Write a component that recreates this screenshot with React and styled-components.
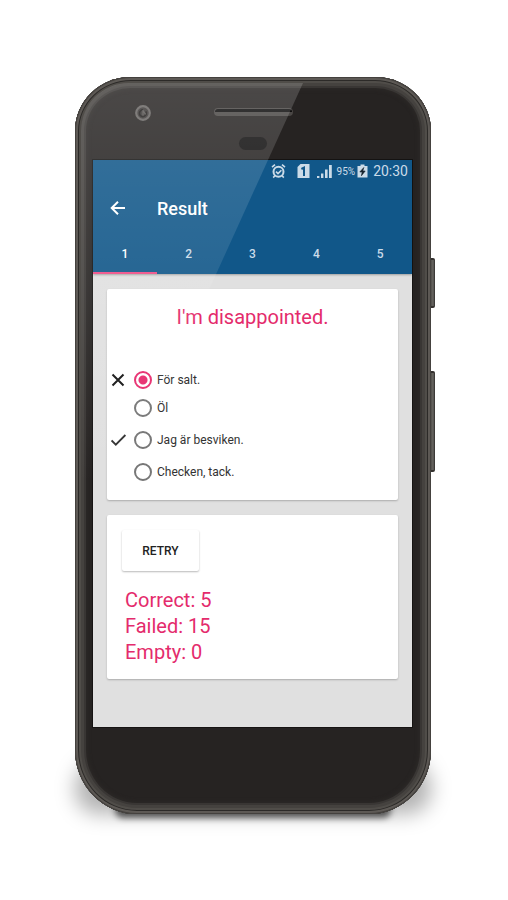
import React, { useState } from "react";
import styled, { createGlobalStyle } from "styled-components";

const GlobalStyle = createGlobalStyle`
  *, *::before, *::after { box-sizing: border-box; }
  body { margin: 0; background: #fff; font-family: Roboto, "Liberation Sans", sans-serif; }
  button { font-family: inherit; cursor: pointer; }
`;

const Page = styled.main`
  min-height: 100vh;
  padding: 77px 77px 86px 75px;
`;

const PhoneWrap = styled.div`
  position: relative;
  &::before {
    content: "";
    position: absolute;
    left: 0;
    right: 0;
    bottom: 0;
    height: 56px;
    border-radius: 30px 30px 24px 24px;
    background: rgba(0, 0, 0, 0.3);
    filter: blur(10px);
  }
  &::after {
    content: "";
    position: absolute;
    z-index: -1;
    left: 40px;
    right: 40px;
    bottom: -4px;
    height: 16px;
    border-radius: 8px;
    background: rgba(0, 0, 0, 0.6);
    filter: blur(3px);
  }
`;

const SideButton = styled.span`
  position: absolute;
  right: -4px;
  top: ${(p) => p.$top}px;
  width: 5px;
  height: ${(p) => p.$length}px;
  border-radius: 0 2px 2px 0;
  background: linear-gradient(90deg, #45433f, #696763 60%, #2e2c2a);
  border-block: 2px solid #34312f;
`;

const Phone = styled.div`
  position: relative;
  overflow: hidden;
  border-radius: 56px 56px 62px 62px / 54px 54px 64px 64px;
  background: #262322;
  box-shadow: inset 0 0 0 1px #44413e, inset 0 0 0 3px #5d5955,
    inset 0 0 0 4px #2c2a28, inset 0 0 0 6px #504d49, inset 0 0 0 9px #45423f,
    inset 0 0 0 11px #393634, inset 0 0 4px 12px #2d2a28;
`;

const Glare = styled.div`
  position: absolute;
  inset: 6px 6px auto;
  height: 500px;
  border-radius: 48px 48px 0 0;
  background: linear-gradient(180deg, rgba(255, 255, 255, 0.17), rgba(255, 255, 255, 0.09) 200px, rgba(255, 255, 255, 0) 400px);
  clip-path: polygon(0 0, 222px 0, 0 488px);
  pointer-events: none;
`;

const TopBezel = styled.div`
  height: 83px;
  padding-top: 27px;
  display: grid;
  grid-template-columns: 1fr 80px 1fr;
  justify-items: center;
  align-items: start;
`;

const Camera = styled.svg`
  display: block;
  justify-self: start;
  margin-left: 59px;
`;

const Receiver = styled.div`
  display: flex;
  flex-direction: column;
  align-items: center;
  gap: 21px;
  padding-top: 4px;
`;

const Speaker = styled.span`
  width: 79px;
  height: 8px;
  border-radius: 4px;
  background: #0c0b0b;
  border: 1px solid #4a4745;
  border-bottom: 4px solid #4a4745;
`;

const Sensor = styled.span`
  width: 28px;
  height: 13px;
  border-radius: 7px;
  background: #100f0f;
`;

const Screen = styled.div`
  position: relative;
  margin: 0 19px 0 18px;
  background: #e0e0e0;
  box-shadow: 0 0 0 1px #161413;
`;

const BottomBezel = styled.div`
  height: 87px;
`;

const AppBar = styled.header`
  background: #115789;
  color: #fff;
  box-shadow: 0 1px 2px rgba(0, 0, 0, 0.3);
`;

const StatusBar = styled.div`
  height: 22px;
  padding-right: 4px;
  display: flex;
  align-items: center;
  justify-content: flex-end;
  color: #cbdbe8;
  svg { display: block; }
`;

const StatusIcon = styled.svg`
  margin-right: ${(p) => p.$gap}px;
`;

const Battery = styled.span`
  font-size: 10px;
  margin-right: 2px;
`;

const Clock = styled.time`
  font-size: 14px;
`;

const Toolbar = styled.div`
  height: 52px;
  display: flex;
  align-items: center;
  gap: 28px;
  padding-left: 14px;
`;

const BackButton = styled.button`
  width: 22px;
  height: 22px;
  padding: 0;
  border: 0;
  background: none;
  color: inherit;
  svg { display: block; }
`;

const Title = styled.h1`
  margin: 0;
  font-size: 18px;
  font-weight: 500;
`;

const Tabs = styled.div`
  display: grid;
  grid-template-columns: repeat(5, 1fr);
`;

const Tab = styled.button`
  height: 40px;
  padding: 2px 0 0;
  border: 0;
  border-bottom: 2px solid ${(p) => (p["aria-selected"] ? "#ee4d86" : "transparent")};
  background: none;
  color: ${(p) => (p["aria-selected"] ? "#fff" : "#cbdce9")};
  font-size: 12px;
  font-weight: 500;
`;

const Content = styled.div`
  display: flex;
  flex-direction: column;
  gap: 15px;
  padding: 15px 14px 48px;
`;

const Card = styled.section`
  background: #fff;
  border-radius: 2px;
  box-shadow: 0 1px 2px rgba(0, 0, 0, 0.24);
`;

const Question = styled.h2`
  margin: 0;
  padding: 16px 0 39px;
  text-align: center;
  font-size: 20px;
  line-height: 24px;
  font-weight: 400;
  color: #e42b6c;
`;

const Options = styled.div`
  padding-bottom: 12px;
`;

const Option = styled.label`
  display: grid;
  grid-template-columns: 16px 18px 1fr;
  column-gap: 6px;
  align-items: center;
  height: ${(p) => (p.$compact ? 24 : 32)}px;
  padding-left: 4px;
  font-size: 12px;
  color: #333;
`;

const Mark = styled.span`
  display: flex;
  svg { display: block; }
`;

const Radio = styled.input`
  appearance: none;
  width: 18px;
  height: 18px;
  margin: 0 0 0 1px;
  border: 2px solid #777;
  border-radius: 50%;
  background: #fff;
  &:checked {
    border-color: #e72d6f;
    background: radial-gradient(circle, #e72d6f 4px, #fff 5px);
  }
`;

const OptionText = styled.span``;

const Summary = styled(Card)`
  padding: 15px 15px 14px;
`;

const Retry = styled.button`
  display: block;
  width: 77px;
  height: 41px;
  border: 0;
  border-radius: 2px;
  background: #fff;
  box-shadow: 0 1px 2px rgba(0, 0, 0, 0.28);
  color: #222;
  font-size: 12px;
  font-weight: 500;
`;

const Scores = styled.div`
  padding: 16px 3px 0;
  font-size: 20px;
  line-height: 26px;
  color: #e42b6c;
`;

const Score = styled.p`
  margin: 0;
`;

const Cross = () => (
  <svg width="16" height="16" viewBox="0 0 16 16" fill="none" stroke="#171717" strokeWidth="2" aria-label="Wrong">
    <path d="M1.5 2.5l11 11M12.5 2.5l-11 11" />
  </svg>
);

const Check = () => (
  <svg width="16" height="16" viewBox="0 0 16 16" fill="none" stroke="#333" strokeWidth="1.8" aria-label="Right answer">
    <path d="M.6 8.5l4.2 4.2L14.4 3" />
  </svg>
);

const answers = [
  { text: "För salt.", mark: <Cross /> },
  { text: "Öl" },
  { text: "Jag är besviken.", mark: <Check /> },
  { text: "Checken, tack." },
];

const scores = [["Correct", 5], ["Failed", 15], ["Empty", 0]];

export default function App() {
  const [tab, setTab] = useState(1);
  const [choice, setChoice] = useState(0);
  return (
    <Page>
      <GlobalStyle />
      <PhoneWrap>
        <SideButton $top={181} $length={50} />
        <SideButton $top={294} $length={101} />
        <Phone>
          <TopBezel>
            <Camera width="18" height="18" viewBox="0 0 18 18" fill="none">
              <circle cx="9" cy="9" r="6.8" fill="#3c3938" stroke="#686563" strokeWidth="2.2" />
              <path d="M9 5.8a3.4 3.4 0 1 0 2.8 1.6" stroke="#1f1d1c" strokeWidth="1.6" />
              <path d="M9 6v5.6M9 6.6l2.6 3.8" stroke="#5e5b59" strokeWidth="1.2" />
            </Camera>
            <Receiver>
              <Speaker />
              <Sensor />
            </Receiver>
          </TopBezel>
          <Screen>
            <AppBar>
              <StatusBar>
                <StatusIcon $gap={11} width="15" height="16" viewBox="0 0 15 16" fill="none" stroke="currentColor" strokeWidth="2">
                  <circle cx="7.5" cy="8.8" r="5" />
                  <path d="M1 4.2L4 1.6M14 4.2l-3-2.6M5 8.6l2 2 3.4-3.4M3.8 12.8l-1.6 1.8M11.2 12.8l1.6 1.8" strokeWidth="1.6" />
                </StatusIcon>
                <StatusIcon $gap={7} width="13" height="15" viewBox="0 0 13 15">
                  <path d="M3.5 0H12.5V14H.5V3z" fill="currentColor" />
                  <path d="M4.4 5l2.6-1.4V12" stroke="#115789" strokeWidth="2" fill="none" />
                </StatusIcon>
                <StatusIcon $gap={5} width="15" height="15" viewBox="0 0 15 15" fill="currentColor">
                  <path d="M0 12h2.4v2H0zM4 9.5h2.4V14H4zM8 5.5h2.6V14H8zM12 1h2.8v13H12z" />
                </StatusIcon>
                <Battery>95%</Battery>
                <StatusIcon $gap={5} width="11" height="14" viewBox="0 0 11 14">
                  <path d="M3.5 .5h4V2h3v11.5H.5V2h3z" fill="currentColor" />
                  <path d="M6.8 3.5L2.8 8h2.4l-.8 3.8L8.2 7H5.8z" fill="#16232e" stroke="#16232e" strokeWidth=".6" />
                </StatusIcon>
                <Clock>20:30</Clock>
              </StatusBar>
              <Toolbar>
                <BackButton aria-label="Back">
                  <svg width="22" height="22" viewBox="0 0 22 22" fill="none" stroke="currentColor" strokeWidth="2">
                    <path d="M18 11H5M11 4.7L4.7 11l6.3 6.3" />
                  </svg>
                </BackButton>
                <Title>Result</Title>
              </Toolbar>
              <Tabs role="tablist">
                {[1, 2, 3, 4, 5].map((n) => (
                  <Tab key={n} role="tab" aria-selected={tab === n} onClick={() => setTab(n)}>
                    {n}
                  </Tab>
                ))}
              </Tabs>
            </AppBar>
            <Content>
              <Card>
                <Question>I'm disappointed.</Question>
                <Options role="radiogroup" aria-label="I'm disappointed.">
                  {answers.map((a, i) => (
                    <Option key={a.text} $compact={i === 0}>
                      <Mark>{a.mark}</Mark>
                      <Radio type="radio" name="answer" checked={choice === i} onChange={() => setChoice(i)} />
                      <OptionText>{a.text}</OptionText>
                    </Option>
                  ))}
                </Options>
              </Card>
              <Summary>
                <Retry>RETRY</Retry>
                <Scores>
                  {scores.map(([name, value]) => (
                    <Score key={name}>{name}: {value}</Score>
                  ))}
                </Scores>
              </Summary>
            </Content>
          </Screen>
          <BottomBezel />
          <Glare />
        </Phone>
      </PhoneWrap>
    </Page>
  );
}
